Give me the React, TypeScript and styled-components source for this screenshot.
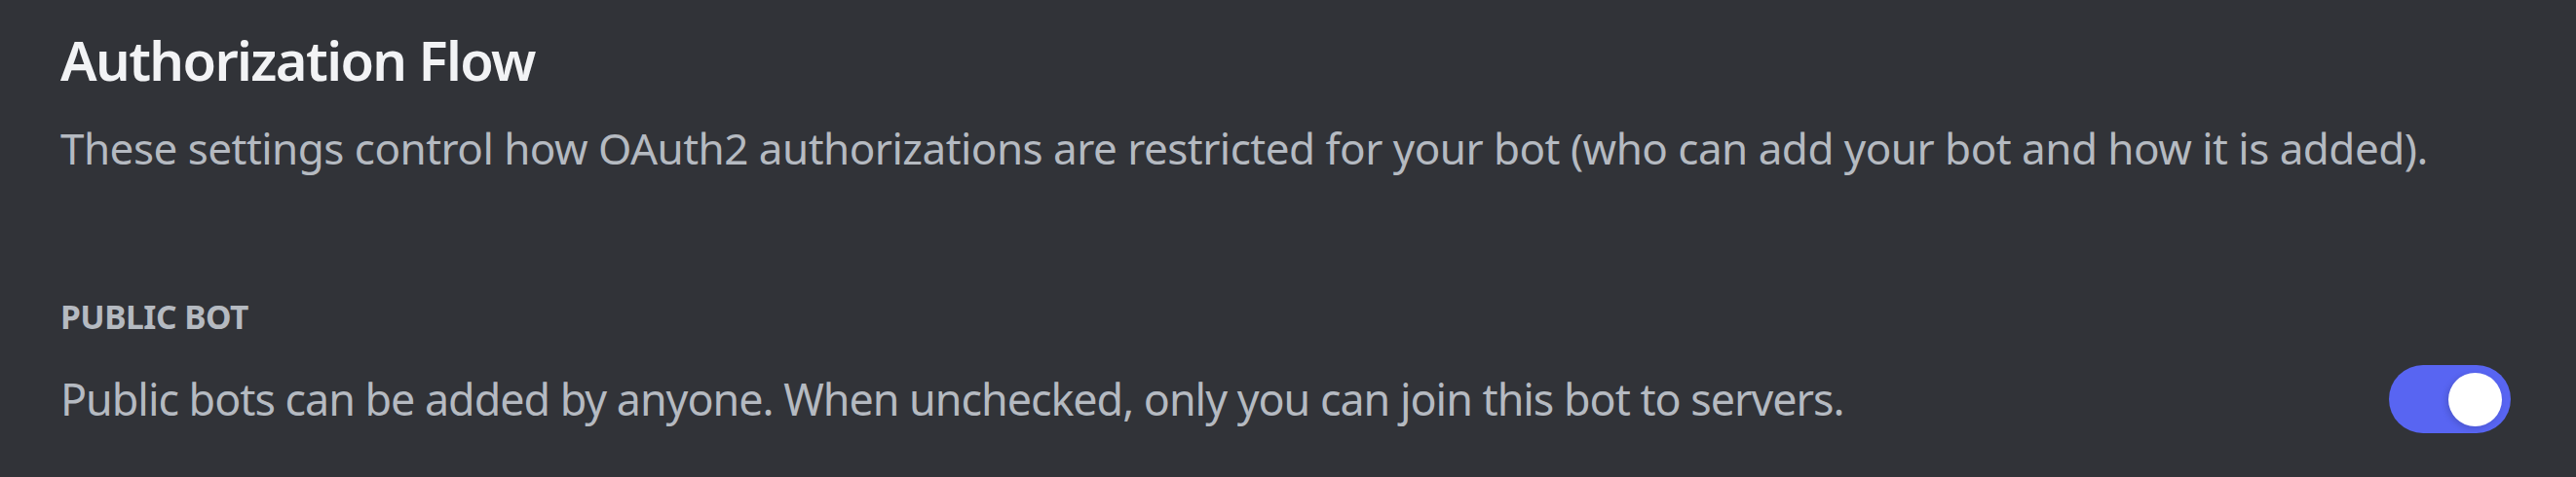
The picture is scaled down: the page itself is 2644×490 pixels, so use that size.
import styled, { createGlobalStyle } from "styled-components";

const GlobalStyle = createGlobalStyle`
  html, body {
    margin: 0;
    padding: 0;
    background: #313338;
  }
  body {
    font-family: "Noto Sans", "Open Sans", sans-serif;
  }
`;

const Page = styled.section`
  box-sizing: border-box;
  width: 2644px;
  height: 490px;
  padding: 26px 67px 0 62px;
  background: #313338;
`;

const Title = styled.h2`
  margin: 0;
  font-size: 56px;
  line-height: 70px;
  font-weight: 600;
  letter-spacing: -1.6px;
  color: #f2f3f5;
`;

const Description = styled.p`
  margin: 28px 0 0;
  font-size: 44px;
  line-height: 56px;
  letter-spacing: -0.52px;
  color: #b5bac1;
`;

const Setting = styled.div`
  margin-top: 123px;
`;

const Label = styled.h3`
  margin: 0;
  font-size: 33.6px;
  line-height: 44px;
  font-weight: 700;
  letter-spacing: -0.5px;
  text-transform: uppercase;
  color: #b5bac1;
`;

const Row = styled.div`
  display: flex;
  align-items: center;
  justify-content: space-between;
  gap: 40px;
  margin-top: 28px;
`;

const Hint = styled.span`
  font-size: 44.8px;
  line-height: 56px;
  letter-spacing: -1px;
  color: #b5bac1;
`;

const Switch = styled.button<{ $on: boolean }>`
  position: relative;
  flex: none;
  width: 125px;
  height: 70px;
  padding: 0;
  border: none;
  border-radius: 35px;
  background: ${(p) => (p.$on ? "#5865f2" : "#80848e")};
  cursor: pointer;
`;

const Knob = styled.span<{ $on: boolean }>`
  position: absolute;
  top: 8px;
  left: ${(p) => (p.$on ? "61px" : "9px")};
  width: 55px;
  height: 55px;
  border-radius: 50%;
  background: #ffffff;
  box-shadow: -2px 2px 6px rgba(0, 0, 0, 0.15);
`;

const App = () => {
  const publicBot = true;

  return (
    <>
      <GlobalStyle />
      <Page>
        <Title>Authorization Flow</Title>
        <Description>
          These settings control how OAuth2 authorizations are restricted for your bot (who can add
          your bot and how it is added).
        </Description>
        <Setting>
          <Label>Public Bot</Label>
          <Row>
            <Hint>
              Public bots can be added by anyone. When unchecked, only you can join this bot to
              servers.
            </Hint>
            <Switch $on={publicBot} aria-pressed={publicBot}>
              <Knob $on={publicBot} />
            </Switch>
          </Row>
        </Setting>
      </Page>
    </>
  );
};

export default App;
